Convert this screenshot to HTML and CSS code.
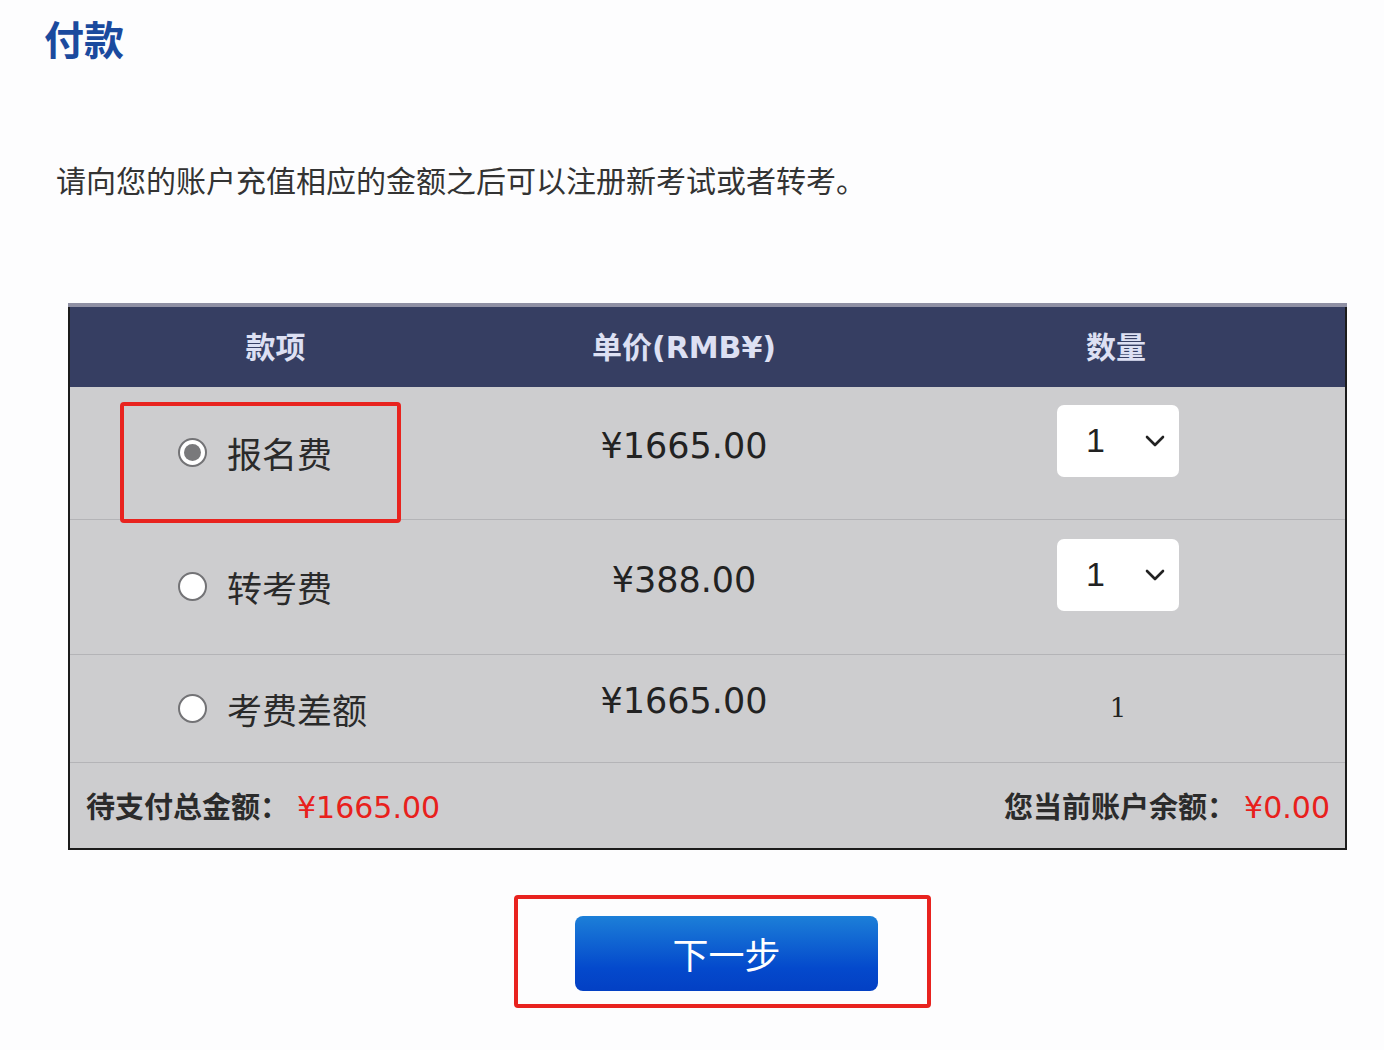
FILE: index.html
```html
<!DOCTYPE html>
<html lang="zh-CN">
<head>
<meta charset="utf-8">
<title>付款</title>
<link rel="stylesheet" href="styles.css">
</head>
<body>
<h1 class="title">付款</h1>
<p class="intro">请向您的账户充值相应的金额之后可以注册新考试或者转考。</p>

<table class="pay">
  <colgroup>
    <col class="c1"><col class="c2"><col class="c3">
  </colgroup>
  <thead>
    <tr class="head">
      <th>款项</th>
      <th>单价<span class="latin">(RMB¥)</span></th>
      <th>数量</th>
    </tr>
  </thead>
  <tbody>
    <tr class="row r1">
      <td class="item">
        <span class="mark"></span>
        <label class="opt"><span class="radio checked"></span><span class="name">报名费</span></label>
      </td>
      <td class="price">¥1665.00</td>
      <td class="qty"><div class="select"><span class="val">1</span><svg class="chev" width="22" height="14" viewBox="0 0 22 14"><path d="M3 3 L11 11 L19 3" fill="none" stroke="#222" stroke-width="2.6" stroke-linecap="round" stroke-linejoin="round"/></svg></div></td>
    </tr>
    <tr class="row r2">
      <td class="item">
        <label class="opt"><span class="radio"></span><span class="name">转考费</span></label>
      </td>
      <td class="price">¥388.00</td>
      <td class="qty"><div class="select"><span class="val">1</span><svg class="chev" width="22" height="14" viewBox="0 0 22 14"><path d="M3 3 L11 11 L19 3" fill="none" stroke="#222" stroke-width="2.6" stroke-linecap="round" stroke-linejoin="round"/></svg></div></td>
    </tr>
    <tr class="row r3">
      <td class="item">
        <label class="opt"><span class="radio"></span><span class="name">考费差额</span></label>
      </td>
      <td class="price">¥1665.00</td>
      <td class="qty plain">1</td>
    </tr>
    <tr class="foot">
      <td colspan="3">
        <div class="sum">
          <span class="lbl">待支付总金额：<span class="amt">¥1665.00</span></span>
          <span class="lbl">您当前账户余额：<span class="amt">¥0.00</span></span>
        </div>
      </td>
    </tr>
  </tbody>
</table>

<div class="next-wrap">
  <button class="next" type="button">下一步</button>
</div>
</body>
</html>
```

FILE: styles.css
```css
html, body {
  margin: 0;
  padding: 0;
  background: #fdfdfe;
  font-family: "Noto Sans CJK SC", "Noto Sans", sans-serif;
  color: #2b2b2b;
}

.title {
  margin: 0;
  padding: 13px 0 0 44px;
  font-size: 40px;
  line-height: 50px;
  font-weight: 700;
  color: #1b4a9e;
}

.intro {
  margin: 96px 0 0 56px;
  font-size: 30px;
  line-height: 40px;
  color: #333;
}

.pay {
  margin: 104px 0 0 68px;
  width: 1279px;
  border-collapse: collapse;
  border: 2px solid #1c1c1c;
  border-top: 4px solid #8f90a4;
  background: #cdcdcf;
  table-layout: fixed;
}

.c1 { width: 412px; }
.c2 { width: 406px; }

.head {
  height: 82px;
  background: #363e62;
}

.head th {
  font-size: 30px;
  font-weight: 700;
  color: #dde0f3;
  padding: 0 0 4px 0;
}

.latin {
  font-family: "DejaVu Sans", sans-serif;
  font-size: 30px;
}

.row td {
  border-bottom: 1px solid #b4b4b7;
  padding: 0;
}

.r1 { height: 132px; }
.r2 { height: 135px; }
.r3 { height: 108px; }

.item {
  position: relative;
  padding-left: 108px !important;
}

.opt {
  display: flex;
  align-items: center;
  gap: 20px;
}

.radio {
  width: 29px;
  height: 29px;
  border-radius: 50%;
  border: 2px solid #737376;
  background: #fff;
  box-sizing: border-box;
  display: flex;
  align-items: center;
  justify-content: center;
}

.radio.checked::after {
  content: "";
  width: 17px;
  height: 17px;
  border-radius: 50%;
  background: #79797b;
}

.name {
  font-size: 35px;
  color: #2a2a2a;
}

.mark {
  position: absolute;
  left: 50px;
  top: 15px;
  width: 281px;
  height: 121px;
  border: 4px solid #e8231f;
  border-radius: 4px;
  box-sizing: border-box;
  z-index: 2;
}

.price {
  text-align: center;
  font-family: "DejaVu Sans", "Noto Sans", sans-serif;
  font-size: 35px;
  color: #222;
  padding-bottom: 14px !important;
}

.qty {
  text-align: center;
  padding-left: 4px !important;
}

.r1 .qty, .r2 .qty {
  padding-bottom: 24px !important;
}

.select {
  display: inline-flex;
  align-items: center;
  justify-content: space-between;
  box-sizing: border-box;
  width: 122px;
  height: 72px;
  padding: 0 13px 0 29px;
  background: #fff;
  border-radius: 7px;
}

.val {
  font-family: "Liberation Sans", sans-serif;
  font-size: 34px;
  color: #222;
}

.plain {
  font-family: "DejaVu Serif", serif;
  font-size: 26px;
  color: #222;
}

.foot td {
  height: 85px;
  padding: 0 15px 0 16px;
}

.sum {
  display: flex;
  justify-content: space-between;
  align-items: center;
}

.lbl {
  font-size: 29px;
  font-weight: 700;
  color: #2b2b2b;
}

.amt {
  font-family: "DejaVu Sans", sans-serif;
  font-weight: 400;
  font-size: 30px;
  color: #e8201c;
  margin-left: 8px;
}

.next-wrap {
  margin: 45px 0 0 514px;
  width: 417px;
  height: 113px;
  box-sizing: border-box;
  border: 4px solid #e8231f;
  border-radius: 4px;
  padding: 17px 0 0 57px;
}

.next {
  display: block;
  width: 303px;
  height: 75px;
  border: none;
  border-radius: 8px;
  background: linear-gradient(#1c7fd8, #0449cc 70%, #0340c4);
  color: #fff;
  font-family: "Noto Sans CJK SC", sans-serif;
  font-size: 36px;
  padding: 0;
}
```
